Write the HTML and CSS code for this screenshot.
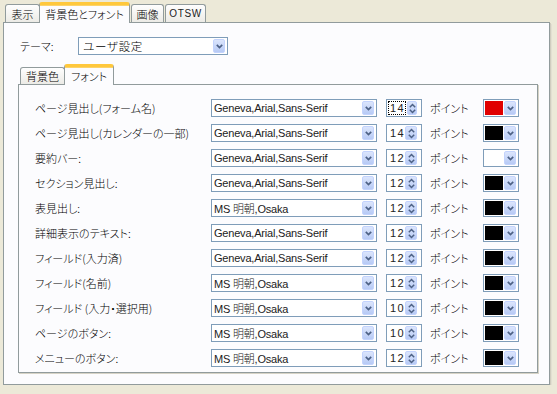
FILE: index.html
```html
<!DOCTYPE html>
<html lang="ja">
<head>
    <meta charset="UTF-8">
    <title>背景色とフォント</title>
    <link rel="stylesheet" href="styles.css">
</head>
<body>
    <div class="dialog">
        <!-- 上のタブ -->
        <div class="tabs">
            <div class="tab tab-a">表示</div>
            <div class="tab tab-on tab-b">背景色とフォント</div>
            <div class="tab tab-c">画像</div>
            <div class="tab tab-d">OTSW</div>
        </div>
        <div class="panel outer">
            <div class="theme-row">
                <span class="theme-label">テーマ:</span>
                <div class="combo combo-theme">
                    <span class="combo-text">ユーザ設定</span>
                    <span class="drop"><svg width="7" height="5" viewBox="0 0 7 5"><path d="M0.8 0.8l2.7 2.7l2.7-2.7" fill="none" stroke="#4d6185" stroke-width="1.7"/></svg></span>
                </div>
            </div>
            <!-- 内側のタブ -->
            <div class="tabs tabs-inner">
                <div class="tab tab-e">背景色</div>
                <div class="tab tab-on tab-f">フォント</div>
            </div>
            <div class="panel inner">
                <div class="rows">
                    <div class="row">
                        <span class="label">ページ見出し(フォーム名)</span>
                        <div class="combo combo-font"><span class="combo-text">Geneva,Arial,Sans-Serif</span><span class="drop"><svg width="7" height="5" viewBox="0 0 7 5"><path d="M0.8 0.8l2.7 2.7l2.7-2.7" fill="none" stroke="#4d6185" stroke-width="1.7"/></svg></span></div>
                        <div class="spin"><span class="num focus">14</span><span class="spin-btn"><svg width="7" height="11" viewBox="0 0 7 11"><path d="M0.8 4.2l2.7-2.7l2.7 2.7M0.8 6.8l2.7 2.7l2.7-2.7" fill="none" stroke="#4d6185" stroke-width="1.5"/></svg></span></div>
                        <span class="point">ポイント</span>
                        <div class="combo combo-color"><span class="swatch red"></span><span class="drop"><svg width="7" height="5" viewBox="0 0 7 5"><path d="M0.8 0.8l2.7 2.7l2.7-2.7" fill="none" stroke="#4d6185" stroke-width="1.7"/></svg></span></div>
                    </div>
                    <div class="row">
                        <span class="label">ページ見出し(カレンダーの一部)</span>
                        <div class="combo combo-font"><span class="combo-text">Geneva,Arial,Sans-Serif</span><span class="drop"><svg width="7" height="5" viewBox="0 0 7 5"><path d="M0.8 0.8l2.7 2.7l2.7-2.7" fill="none" stroke="#4d6185" stroke-width="1.7"/></svg></span></div>
                        <div class="spin"><span class="num">14</span><span class="spin-btn"><svg width="7" height="11" viewBox="0 0 7 11"><path d="M0.8 4.2l2.7-2.7l2.7 2.7M0.8 6.8l2.7 2.7l2.7-2.7" fill="none" stroke="#4d6185" stroke-width="1.5"/></svg></span></div>
                        <span class="point">ポイント</span>
                        <div class="combo combo-color"><span class="swatch"></span><span class="drop"><svg width="7" height="5" viewBox="0 0 7 5"><path d="M0.8 0.8l2.7 2.7l2.7-2.7" fill="none" stroke="#4d6185" stroke-width="1.7"/></svg></span></div>
                    </div>
                    <div class="row">
                        <span class="label">要約バー:</span>
                        <div class="combo combo-font"><span class="combo-text">Geneva,Arial,Sans-Serif</span><span class="drop"><svg width="7" height="5" viewBox="0 0 7 5"><path d="M0.8 0.8l2.7 2.7l2.7-2.7" fill="none" stroke="#4d6185" stroke-width="1.7"/></svg></span></div>
                        <div class="spin"><span class="num">12</span><span class="spin-btn"><svg width="7" height="11" viewBox="0 0 7 11"><path d="M0.8 4.2l2.7-2.7l2.7 2.7M0.8 6.8l2.7 2.7l2.7-2.7" fill="none" stroke="#4d6185" stroke-width="1.5"/></svg></span></div>
                        <span class="point">ポイント</span>
                        <div class="combo combo-color"><span class="swatch white"></span><span class="drop"><svg width="7" height="5" viewBox="0 0 7 5"><path d="M0.8 0.8l2.7 2.7l2.7-2.7" fill="none" stroke="#4d6185" stroke-width="1.7"/></svg></span></div>
                    </div>
                    <div class="row">
                        <span class="label">セクション見出し:</span>
                        <div class="combo combo-font"><span class="combo-text">Geneva,Arial,Sans-Serif</span><span class="drop"><svg width="7" height="5" viewBox="0 0 7 5"><path d="M0.8 0.8l2.7 2.7l2.7-2.7" fill="none" stroke="#4d6185" stroke-width="1.7"/></svg></span></div>
                        <div class="spin"><span class="num">12</span><span class="spin-btn"><svg width="7" height="11" viewBox="0 0 7 11"><path d="M0.8 4.2l2.7-2.7l2.7 2.7M0.8 6.8l2.7 2.7l2.7-2.7" fill="none" stroke="#4d6185" stroke-width="1.5"/></svg></span></div>
                        <span class="point">ポイント</span>
                        <div class="combo combo-color"><span class="swatch"></span><span class="drop"><svg width="7" height="5" viewBox="0 0 7 5"><path d="M0.8 0.8l2.7 2.7l2.7-2.7" fill="none" stroke="#4d6185" stroke-width="1.7"/></svg></span></div>
                    </div>
                    <div class="row">
                        <span class="label">表見出し:</span>
                        <div class="combo combo-font"><span class="combo-text">MS 明朝,Osaka</span><span class="drop"><svg width="7" height="5" viewBox="0 0 7 5"><path d="M0.8 0.8l2.7 2.7l2.7-2.7" fill="none" stroke="#4d6185" stroke-width="1.7"/></svg></span></div>
                        <div class="spin"><span class="num">12</span><span class="spin-btn"><svg width="7" height="11" viewBox="0 0 7 11"><path d="M0.8 4.2l2.7-2.7l2.7 2.7M0.8 6.8l2.7 2.7l2.7-2.7" fill="none" stroke="#4d6185" stroke-width="1.5"/></svg></span></div>
                        <span class="point">ポイント</span>
                        <div class="combo combo-color"><span class="swatch"></span><span class="drop"><svg width="7" height="5" viewBox="0 0 7 5"><path d="M0.8 0.8l2.7 2.7l2.7-2.7" fill="none" stroke="#4d6185" stroke-width="1.7"/></svg></span></div>
                    </div>
                    <div class="row">
                        <span class="label">詳細表示のテキスト:</span>
                        <div class="combo combo-font"><span class="combo-text">Geneva,Arial,Sans-Serif</span><span class="drop"><svg width="7" height="5" viewBox="0 0 7 5"><path d="M0.8 0.8l2.7 2.7l2.7-2.7" fill="none" stroke="#4d6185" stroke-width="1.7"/></svg></span></div>
                        <div class="spin"><span class="num">12</span><span class="spin-btn"><svg width="7" height="11" viewBox="0 0 7 11"><path d="M0.8 4.2l2.7-2.7l2.7 2.7M0.8 6.8l2.7 2.7l2.7-2.7" fill="none" stroke="#4d6185" stroke-width="1.5"/></svg></span></div>
                        <span class="point">ポイント</span>
                        <div class="combo combo-color"><span class="swatch"></span><span class="drop"><svg width="7" height="5" viewBox="0 0 7 5"><path d="M0.8 0.8l2.7 2.7l2.7-2.7" fill="none" stroke="#4d6185" stroke-width="1.7"/></svg></span></div>
                    </div>
                    <div class="row">
                        <span class="label">フィールド(入力済)</span>
                        <div class="combo combo-font"><span class="combo-text">Geneva,Arial,Sans-Serif</span><span class="drop"><svg width="7" height="5" viewBox="0 0 7 5"><path d="M0.8 0.8l2.7 2.7l2.7-2.7" fill="none" stroke="#4d6185" stroke-width="1.7"/></svg></span></div>
                        <div class="spin"><span class="num">12</span><span class="spin-btn"><svg width="7" height="11" viewBox="0 0 7 11"><path d="M0.8 4.2l2.7-2.7l2.7 2.7M0.8 6.8l2.7 2.7l2.7-2.7" fill="none" stroke="#4d6185" stroke-width="1.5"/></svg></span></div>
                        <span class="point">ポイント</span>
                        <div class="combo combo-color"><span class="swatch"></span><span class="drop"><svg width="7" height="5" viewBox="0 0 7 5"><path d="M0.8 0.8l2.7 2.7l2.7-2.7" fill="none" stroke="#4d6185" stroke-width="1.7"/></svg></span></div>
                    </div>
                    <div class="row">
                        <span class="label">フィールド(名前)</span>
                        <div class="combo combo-font"><span class="combo-text">MS 明朝,Osaka</span><span class="drop"><svg width="7" height="5" viewBox="0 0 7 5"><path d="M0.8 0.8l2.7 2.7l2.7-2.7" fill="none" stroke="#4d6185" stroke-width="1.7"/></svg></span></div>
                        <div class="spin"><span class="num">12</span><span class="spin-btn"><svg width="7" height="11" viewBox="0 0 7 11"><path d="M0.8 4.2l2.7-2.7l2.7 2.7M0.8 6.8l2.7 2.7l2.7-2.7" fill="none" stroke="#4d6185" stroke-width="1.5"/></svg></span></div>
                        <span class="point">ポイント</span>
                        <div class="combo combo-color"><span class="swatch"></span><span class="drop"><svg width="7" height="5" viewBox="0 0 7 5"><path d="M0.8 0.8l2.7 2.7l2.7-2.7" fill="none" stroke="#4d6185" stroke-width="1.7"/></svg></span></div>
                    </div>
                    <div class="row">
                        <span class="label">フィールド (入力・選択用)</span>
                        <div class="combo combo-font"><span class="combo-text">MS 明朝,Osaka</span><span class="drop"><svg width="7" height="5" viewBox="0 0 7 5"><path d="M0.8 0.8l2.7 2.7l2.7-2.7" fill="none" stroke="#4d6185" stroke-width="1.7"/></svg></span></div>
                        <div class="spin"><span class="num">10</span><span class="spin-btn"><svg width="7" height="11" viewBox="0 0 7 11"><path d="M0.8 4.2l2.7-2.7l2.7 2.7M0.8 6.8l2.7 2.7l2.7-2.7" fill="none" stroke="#4d6185" stroke-width="1.5"/></svg></span></div>
                        <span class="point">ポイント</span>
                        <div class="combo combo-color"><span class="swatch"></span><span class="drop"><svg width="7" height="5" viewBox="0 0 7 5"><path d="M0.8 0.8l2.7 2.7l2.7-2.7" fill="none" stroke="#4d6185" stroke-width="1.7"/></svg></span></div>
                    </div>
                    <div class="row">
                        <span class="label">ページのボタン:</span>
                        <div class="combo combo-font"><span class="combo-text">MS 明朝,Osaka</span><span class="drop"><svg width="7" height="5" viewBox="0 0 7 5"><path d="M0.8 0.8l2.7 2.7l2.7-2.7" fill="none" stroke="#4d6185" stroke-width="1.7"/></svg></span></div>
                        <div class="spin"><span class="num">10</span><span class="spin-btn"><svg width="7" height="11" viewBox="0 0 7 11"><path d="M0.8 4.2l2.7-2.7l2.7 2.7M0.8 6.8l2.7 2.7l2.7-2.7" fill="none" stroke="#4d6185" stroke-width="1.5"/></svg></span></div>
                        <span class="point">ポイント</span>
                        <div class="combo combo-color"><span class="swatch"></span><span class="drop"><svg width="7" height="5" viewBox="0 0 7 5"><path d="M0.8 0.8l2.7 2.7l2.7-2.7" fill="none" stroke="#4d6185" stroke-width="1.7"/></svg></span></div>
                    </div>
                    <div class="row">
                        <span class="label">メニューのボタン:</span>
                        <div class="combo combo-font"><span class="combo-text">MS 明朝,Osaka</span><span class="drop"><svg width="7" height="5" viewBox="0 0 7 5"><path d="M0.8 0.8l2.7 2.7l2.7-2.7" fill="none" stroke="#4d6185" stroke-width="1.7"/></svg></span></div>
                        <div class="spin"><span class="num">12</span><span class="spin-btn"><svg width="7" height="11" viewBox="0 0 7 11"><path d="M0.8 4.2l2.7-2.7l2.7 2.7M0.8 6.8l2.7 2.7l2.7-2.7" fill="none" stroke="#4d6185" stroke-width="1.5"/></svg></span></div>
                        <span class="point">ポイント</span>
                        <div class="combo combo-color"><span class="swatch"></span><span class="drop"><svg width="7" height="5" viewBox="0 0 7 5"><path d="M0.8 0.8l2.7 2.7l2.7-2.7" fill="none" stroke="#4d6185" stroke-width="1.7"/></svg></span></div>
                    </div>
                </div>
            </div>
        </div>
    </div>
</body>
</html>
```

FILE: styles.css
```css
*{margin:0;padding:0;box-sizing:border-box;}
body{
    background:#ece9d8;
    font-family:"Noto Sans CJK JP","Liberation Sans",sans-serif;
    font-size:11px;
    font-weight:300;
    font-feature-settings:"palt";
    color:#000;
}
.dialog{padding:0 0 0 3px;width:550px;}

/* タブ */
.tabs{display:flex;align-items:flex-end;height:20px;margin-top:2px;padding-left:2px;}
.tab{
    height:18px;
    border:1px solid #919b9c;
    border-bottom:none;
    border-radius:3px 3px 0 0;
    background:linear-gradient(#fefefe,#ecebe6);
    display:flex;align-items:center;justify-content:center;
    line-height:1;
    padding-top:1px;
}
.tab-on{
    height:21px;
    margin-bottom:-1px;
    background:#fcfcfe;
    border-top:3px solid #ffc83c;
    box-shadow:inset 0 1px 0 #fbd36a;
    position:relative;z-index:1;
    padding-top:0;
}
.tab-a{width:35px;}
.tab-b{width:91px;margin-left:-1px;}
.tab-c{width:33px;margin-left:1px;}
.tab-d{width:41px;margin-left:1px;font-family:"Liberation Sans","Noto Sans CJK JP",sans-serif;font-size:10px;font-weight:400;letter-spacing:.6px;color:#222;}

.panel{border:1px solid #919b9c;background:#fcfcfe;}
.outer{
    height:363px;
    width:547px;
    padding:14px 11px 0 14px;
    box-shadow:1px 1px 0 #d0cdbf,2px 2px 0 #e2dfd2;
}
.theme-row{display:flex;align-items:center;height:18px;}
.theme-label{width:58px;margin-left:2px;}

.tabs-inner{margin-top:9px;height:20px;}
.tab-e{width:45px;height:17px;}
.tab-f{width:50px;margin-left:-1px;}

.inner{
    height:289px;
    padding:14px 0 0 16px;
    box-shadow:1px 1px 0 #d6d3c6;
}
.rows{display:flex;flex-direction:column;gap:7px;}
.row{display:flex;align-items:center;height:18px;}
.label{width:176px;white-space:nowrap;}
.point{width:53px;margin-left:8px;}

/* コンボ */
.combo{
    height:18px;
    border:1px solid #7f9db9;
    background:#fff;
    display:flex;align-items:center;
    padding:1px;
}
.combo-text{
    flex:1;
    padding-left:1px;
    white-space:nowrap;
    font-family:"Liberation Sans","Noto Sans CJK JP",sans-serif;
    font-size:11px;
    font-weight:300;
    letter-spacing:-.2px;
    font-feature-settings:normal;
    color:#222;
}
.combo-theme{width:150px;}
.combo-theme .combo-text{font-family:"Noto Sans CJK JP",sans-serif;font-size:11.5px;padding-left:3px;letter-spacing:.5px;color:#000;}
.combo-font{width:166px;}
.combo-color{width:36px;}
.drop,.spin-btn{
    width:12px;height:14px;
    margin-right:1px;
    border:1px solid #c3d3fd;
    border-radius:2px;
    background:linear-gradient(#dbe5fc,#b7caf5);
    display:flex;align-items:center;justify-content:center;
}
.swatch{width:19px;height:14px;margin-right:1px;background:#000;}
.swatch.red{background:#e00000;}
.swatch.white{background:#fff;}

.spin{
    width:36px;height:18px;margin-left:9px;
    border:1px solid #7f9db9;background:#fff;
    display:flex;align-items:center;
    padding:1px 4px 1px 2px;
}
.num{
    flex:1;
    font-family:"Liberation Sans",sans-serif;
    font-size:11px;
    font-weight:400;
    letter-spacing:1.5px;
    padding-left:1px;
    line-height:12px;
    color:#222;
}
.num.focus{outline:1px dotted #000;outline-offset:0;flex:none;width:16px;margin-right:2px;}
.spin-btn{height:14px;margin-right:0;}
```
